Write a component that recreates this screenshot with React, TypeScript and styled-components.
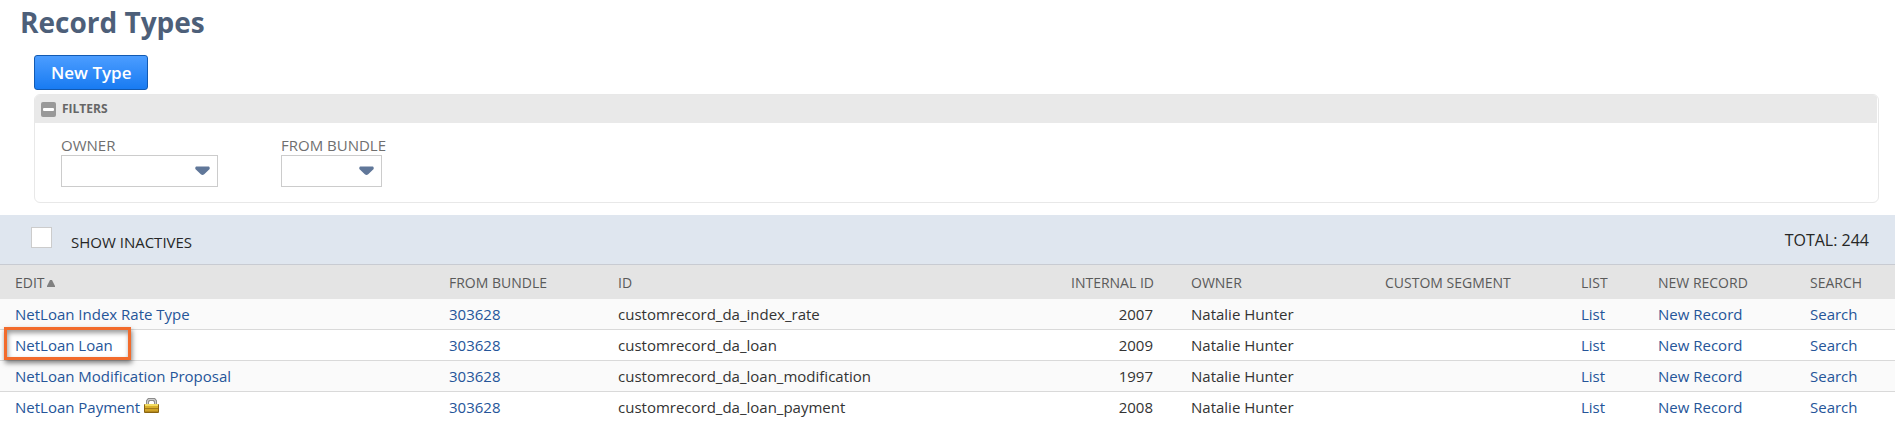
import React from "react";
import styled, { createGlobalStyle } from "styled-components";

const GlobalStyle = createGlobalStyle`
  *, *::before, *::after { box-sizing: border-box; }
  body {
    margin: 0;
    background: #fff;
    color: #333;
    font-family: "Open Sans", sans-serif;
    font-size: 15px;
  }
`;

const Page = styled.main`
  display: flex;
  flex-direction: column;
  overflow: hidden;
`;

const Title = styled.h1`
  margin: 0;
  padding: 4px 20px 0;
  color: #4d5f79;
  font-size: 28px;
  font-weight: 700;
  line-height: 36px;
`;

const Controls = styled.section`
  display: flex;
  flex-direction: column;
  align-items: flex-start;
  gap: 4px;
  padding: 15px 16px 12px 34px;
`;

const PrimaryButton = styled.button`
  height: 35px;
  padding: 1px 16px 0;
  border: 1px solid #125ab2;
  border-radius: 3px;
  background: linear-gradient(#4c9dff, #187bf2);
  color: #fff;
  font-family: inherit;
  font-size: 17px;
  font-weight: 600;
  line-height: 24px;
  white-space: nowrap;
`;

const FilterPanel = styled.div`
  width: 100%;
  border: 1px solid #e8e8e8;
  border-radius: 6px;
  overflow: hidden;
`;

const FilterHeader = styled.div`
  display: flex;
  align-items: center;
  gap: 6px;
  height: 28px;
  margin-right: 1px;
  padding-left: 6px;
  background: #e9e9e9;
`;

const CollapseButton = styled.button`
  display: flex;
  margin-top: 1px;
  padding: 0;
  border: 0;
  background: none;
`;

const FilterTitle = styled.h2`
  margin: 0;
  color: #666;
  font-size: 12px;
  font-weight: 700;
  line-height: 16px;
`;

const FilterFields = styled.div`
  display: flex;
  gap: 63px;
  padding: 12px 26px 15px;
`;

const Field = styled.div<{ $width: number }>`
  display: flex;
  flex-direction: column;
  width: ${(p) => p.$width}px;
`;

const FieldLabel = styled.label`
  color: #6f6f6f;
  line-height: 20px;
  white-space: nowrap;
`;

const SelectBox = styled.div`
  display: grid;
  align-items: center;
  > * { grid-area: 1 / 1; }
  svg {
    justify-self: end;
    margin-right: 8px;
    pointer-events: none;
  }
`;

const Select = styled.select`
  appearance: none;
  width: 100%;
  height: 32px;
  padding: 0 24px 0 8px;
  border: 1px solid #ccc;
  border-radius: 0;
  background: #fff;
  color: inherit;
  font: inherit;
`;

const ListBar = styled.div`
  display: flex;
  justify-content: space-between;
  height: 50px;
  padding: 0 26px 0 31px;
  border-bottom: 1px solid #c8cbd2;
  background: #dfe6ef;
  color: #262626;
`;

const InactiveToggle = styled.label`
  display: flex;
  align-items: flex-start;
  gap: 19px;
  padding-top: 12px;
  line-height: 30px;
  white-space: nowrap;
`;

const Checkbox = styled.input`
  appearance: none;
  width: 21px;
  height: 21px;
  margin: 0;
  border: 1px solid #ccc;
  background: #fff;
  &:checked { background: #607799; }
`;

const Total = styled.span`
  font-size: 16px;
  line-height: 50px;
  white-space: nowrap;
`;

const Table = styled.table`
  width: 100%;
  table-layout: fixed;
  border-collapse: separate;
  border-spacing: 0;
`;

const Col = styled.col<{ $width?: number }>`
  width: ${(p) => (p.$width ? `${p.$width}px` : "auto")};
`;

const HeadCell = styled.th<{ $end?: boolean }>`
  height: 34px;
  padding: 2px 23px 0 15px;
  background: #e4e4e4;
  color: #5a5a5a;
  font-size: 14px;
  font-weight: 400;
  line-height: 20px;
  text-align: ${(p) => (p.$end ? "right" : "left")};
  white-space: nowrap;
  svg { margin-left: 2px; }
`;

const Row = styled.tr`
  background: #fff;
  &:nth-child(odd) { background: #fafafa; }
`;

const Cell = styled.td<{ $end?: boolean }>`
  height: 31px;
  padding: 0 23px 0 15px;
  border-bottom: 1px solid #d9d9d9;
  line-height: 20px;
  text-align: ${(p) => (p.$end ? "right" : "left")};
  white-space: nowrap;
  svg { margin-left: 4px; }
`;

const Link = styled.a<{ $marked?: boolean }>`
  position: relative;
  color: #255599;
  text-decoration: none;
  ${(p) =>
    p.$marked &&
    `
    &::after {
      content: "";
      position: absolute;
      inset: -8px -18px -5px -11px;
      border: 3px solid #f26b2c;
      box-shadow: 1px 3px 5px rgba(0, 0, 0, 0.5), inset 1px 3px 5px rgba(0, 0, 0, 0.4);
      pointer-events: none;
    }
  `}
`;

const Arrow = () => (
  <svg width="15" height="10" viewBox="0 0 15 10" aria-hidden="true">
    <path d="M1.2 .5h12.6q1 .3.9 1.700v.8L9.200 8.200q-1.700 1.500-3.400 0L.3 3v-.8Q.2.800 1.200.5z" fill="#607799" />
  </svg>
);

const SortArrow = () => (
  <svg width="8" height="8" viewBox="0 0 8 8" aria-hidden="true">
    <path d="M3 0h2l3 6v1H0V6z" fill="#808080" />
  </svg>
);

const Minus = () => (
  <svg width="15" height="15" viewBox="0 0 15 15" aria-hidden="true">
    <rect width="15" height="15" rx="2" fill="#999" />
    <rect x="2" y="6" width="11" height="3" rx="1" fill="#fff" />
  </svg>
);

const Lock = () => (
  <svg width="15" height="15" viewBox="0 0 15 15" aria-hidden="true">
    <path d="M2 6V2.500L4 0h7l2 2.500V6h-3V4L9 3H6L5 4v2z" fill="#8c8c8c" />
    <path d="M3 6V3l1.500-2h6L12 3v3h-1V3.500L10 2H5L4 3.500V6z" fill="#cfcfcf" />
    <rect y="6" width="15" height="9" rx="1" fill="#8a6410" />
    <rect x="1" y="6" width="13" height="2" fill="#f3dc62" />
    <rect x="1" y="8" width="13" height="2" fill="#d8b02c" />
    <rect x="1" y="10" width="13" height="1" fill="#a37a18" />
    <rect x="1" y="11" width="13" height="2" fill="#d0a428" />
    <rect x="1" y="13" width="13" height="1" fill="#b58a1c" />
  </svg>
);

interface RecordType {
  name: string;
  id: string;
  internalId: number;
  marked?: boolean;
  locked?: boolean;
}

const records: RecordType[] = [
  { name: "NetLoan Index Rate Type", id: "customrecord_da_index_rate", internalId: 2007 },
  { name: "NetLoan Loan", id: "customrecord_da_loan", internalId: 2009, marked: true },
  { name: "NetLoan Modification Proposal", id: "customrecord_da_loan_modification", internalId: 1997 },
  { name: "NetLoan Payment", id: "customrecord_da_loan_payment", internalId: 2008, locked: true },
];

export default function App() {
  return (
    <>
      <GlobalStyle />
      <Page>
        <Title>Record Types</Title>
        <Controls>
          <PrimaryButton type="button">New Type</PrimaryButton>
          <FilterPanel>
            <FilterHeader>
              <CollapseButton type="button" aria-label="Collapse filters">
                <Minus />
              </CollapseButton>
              <FilterTitle>FILTERS</FilterTitle>
            </FilterHeader>
            <FilterFields>
              <Field $width={157}>
                <FieldLabel htmlFor="owner">OWNER</FieldLabel>
                <SelectBox>
                  <Select id="owner" />
                  <Arrow />
                </SelectBox>
              </Field>
              <Field $width={101}>
                <FieldLabel htmlFor="bundle">FROM BUNDLE</FieldLabel>
                <SelectBox>
                  <Select id="bundle" />
                  <Arrow />
                </SelectBox>
              </Field>
            </FilterFields>
          </FilterPanel>
        </Controls>
        <ListBar>
          <InactiveToggle>
            <Checkbox type="checkbox" />
            SHOW INACTIVES
          </InactiveToggle>
          <Total>TOTAL: 244</Total>
        </ListBar>
        <Table>
          <colgroup>
            <Col $width={434} />
            <Col $width={169} />
            <Col />
            <Col $width={120} />
            <Col $width={194} />
            <Col $width={196} />
            <Col $width={77} />
            <Col $width={152} />
            <Col $width={100} />
          </colgroup>
          <thead>
            <tr>
              <HeadCell>
                EDIT
                <SortArrow />
              </HeadCell>
              <HeadCell>FROM BUNDLE</HeadCell>
              <HeadCell>ID</HeadCell>
              <HeadCell $end>INTERNAL ID</HeadCell>
              <HeadCell>OWNER</HeadCell>
              <HeadCell>CUSTOM SEGMENT</HeadCell>
              <HeadCell>LIST</HeadCell>
              <HeadCell>NEW RECORD</HeadCell>
              <HeadCell>SEARCH</HeadCell>
            </tr>
          </thead>
          <tbody>
            {records.map((r) => (
              <Row key={r.internalId}>
                <Cell>
                  <Link href="#" $marked={r.marked}>{r.name}</Link>
                  {r.locked && <Lock />}
                </Cell>
                <Cell><Link href="#">303628</Link></Cell>
                <Cell>{r.id}</Cell>
                <Cell $end>{r.internalId}</Cell>
                <Cell>Natalie Hunter</Cell>
                <Cell />
                <Cell><Link href="#">List</Link></Cell>
                <Cell><Link href="#">New Record</Link></Cell>
                <Cell><Link href="#">Search</Link></Cell>
              </Row>
            ))}
          </tbody>
        </Table>
      </Page>
    </>
  );
}
